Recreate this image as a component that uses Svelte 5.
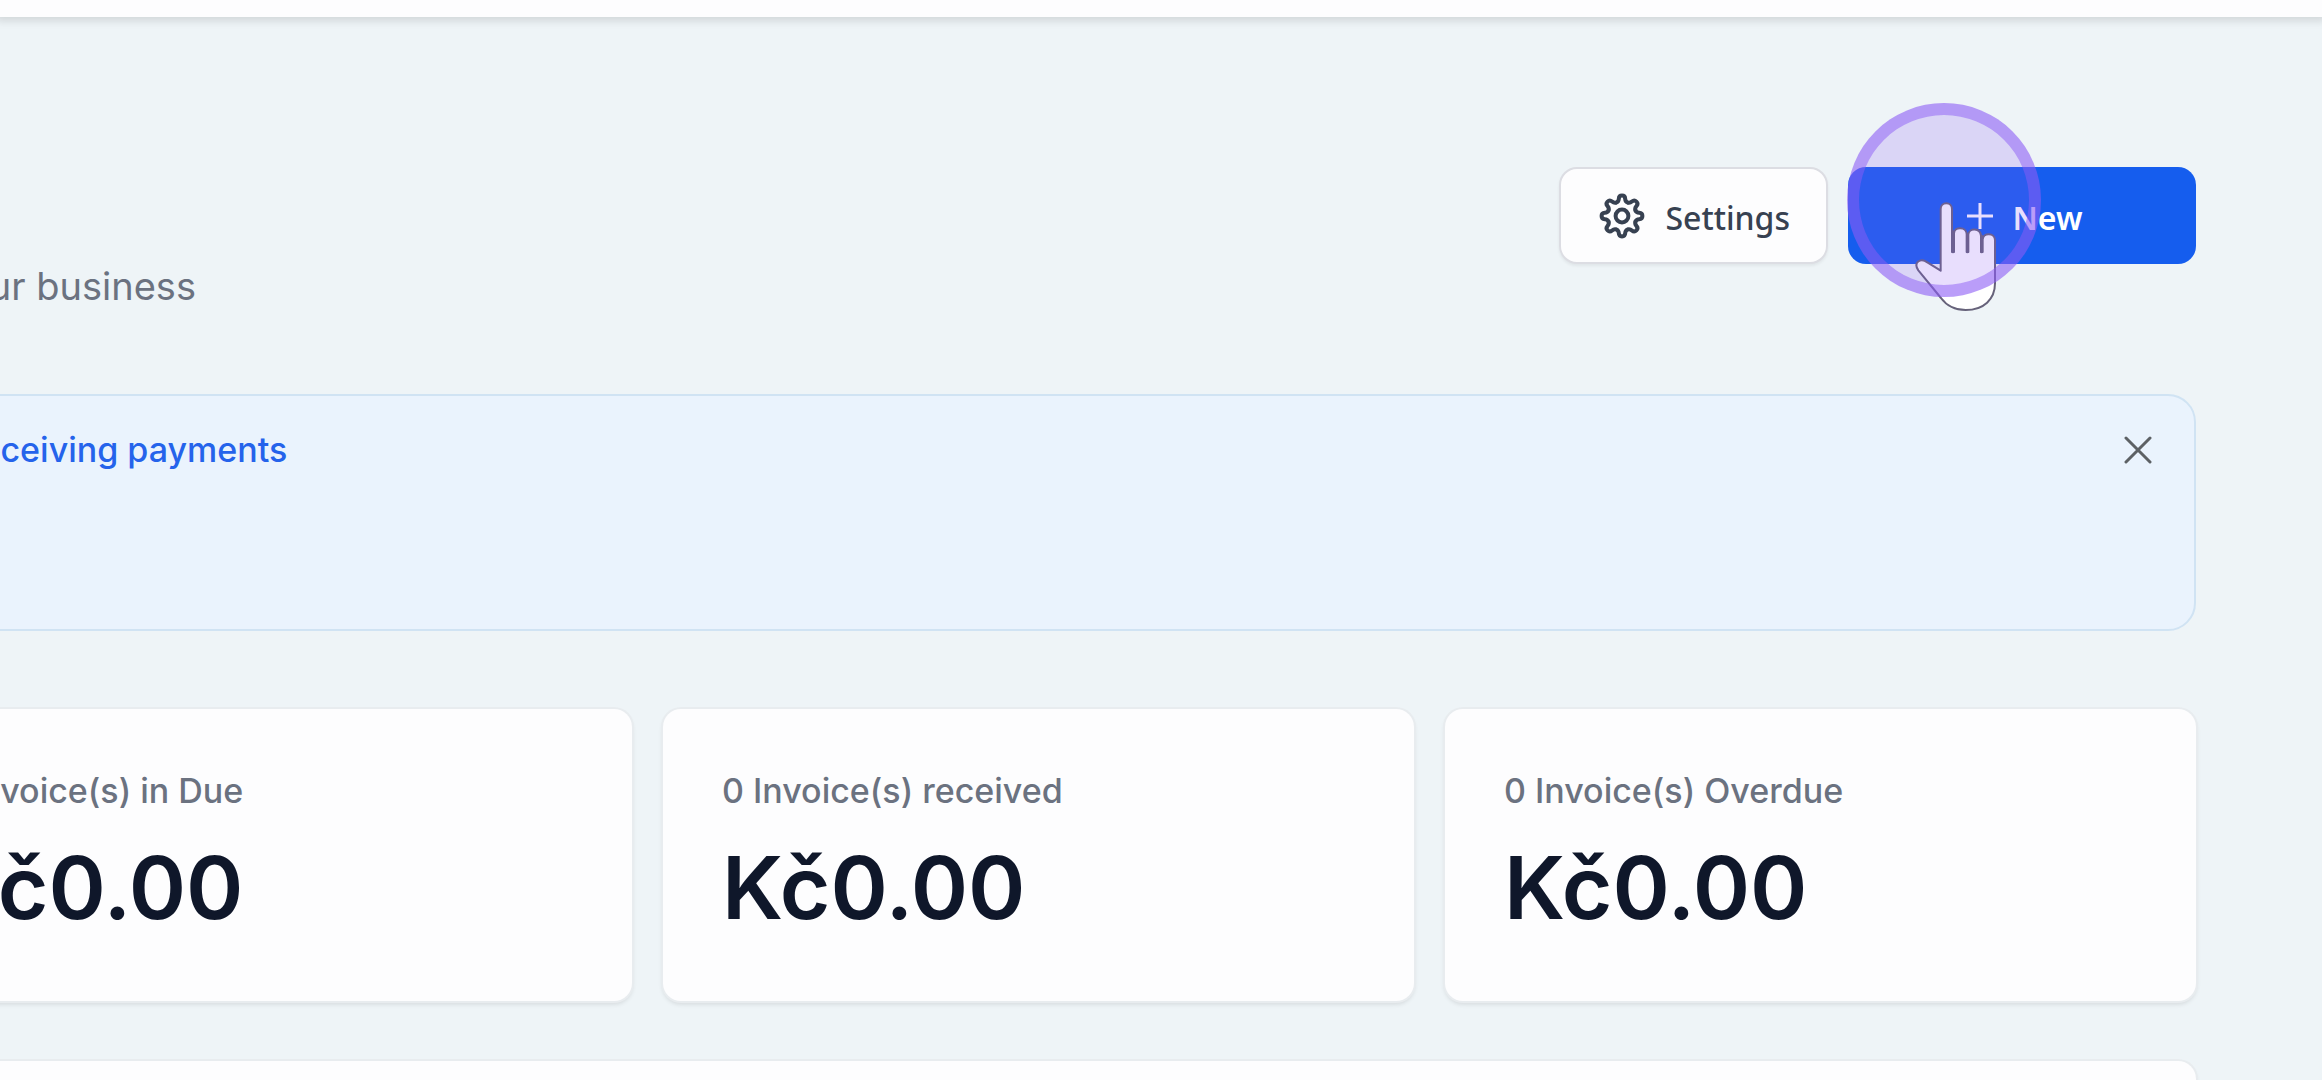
<script lang="ts">
  type Stat = { label: string; amount: string };

  const stats: Stat[] = [
    { label: "0 Invoice(s) in Due", amount: "Kč0.00" },
    { label: "0 Invoice(s) received", amount: "Kč0.00" },
    { label: "0 Invoice(s) Overdue", amount: "Kč0.00" },
  ];

  // one angle per tooth of the cog
  const teeth = [0, 45, 90, 135, 180, 225, 270, 315];

  let showBanner = $state(true);
</script>

<div class="page">
  <header class="topbar"></header>

  <main class="content">
    <div class="heading">
      <p class="subtitle"><span>your business</span></p>

      <div class="actions">
        <button class="btn settings">
          <svg class="cog" viewBox="-23 -23 46 46" aria-hidden="true">
            {#each teeth as angle}
              <path
                transform="rotate({angle})"
                d="M-5.6 -13.5C-3.6 -14.3 -3.3 -15.6 -3.2 -17.2C-3.1 -19.2 -2 -20.4 0 -20.4C2 -20.4 3.1 -19.2 3.2 -17.2C3.3 -15.6 3.6 -14.3 5.6 -13.5"
              />
            {/each}
            <circle r="6.4" />
          </svg>
          <span class="btn-label">Settings</span>
        </button>

        <div class="new-wrap">
          <button class="btn new">
            <svg class="plus" viewBox="0 0 26 26" aria-hidden="true">
              <path d="M13 0V26M0 13H26" />
            </svg>
            <span class="btn-label">New</span>
          </button>
          <svg class="pointer" viewBox="250 330 255 339" aria-hidden="true">
            <path
              d="M333 542V357C333 334 367 334 367 357V486H373V430C374 409 410 409 411 432V486H416V434C418 413 452 413 454 438V486H459V448C461 427 495 427 496 450V580C496 628 462 660 408 660C372 660 350 646 334 624L266 541C250 518 272 502 293 517Z"
            />
            <path class="crease" d="M370 425V486M413 432V486M456 438V486" />
          </svg>
          <span class="click-ring"></span>
        </div>
      </div>
    </div>

    {#if showBanner}
      <section class="banner">
        <a class="banner-link" href="#payments">receiving payments</a>
        <button class="close" aria-label="Close" onclick={() => (showBanner = false)}>
          <svg viewBox="0 0 28 28" aria-hidden="true">
            <path d="M2 2L26 26M26 2L2 26" />
          </svg>
        </button>
      </section>
    {/if}

    <section class="stats">
      {#each stats as stat}
        <article class="card">
          <h2>{stat.label}</h2>
          <p class="amount">{stat.amount}</p>
        </article>
      {/each}
    </section>

    <section class="card panel"></section>
  </main>
</div>

<style>
  :global(body) {
    margin: 0;
  }

  .page {
    display: flex;
    flex-direction: column;
    min-height: 100vh;
    overflow: hidden;
    background: #eef4f7;
    font-family: Inter, "Liberation Sans", sans-serif;
  }

  .topbar {
    height: 17px;
    background: #fdfdfe;
    box-shadow: 0 0 8px 4px rgba(0, 0, 0, 0.12);
  }

  /* the left part of the dashboard runs past the window edge */
  .content {
    flex: 1;
    display: flex;
    flex-direction: column;
    margin-left: -119px;
    padding: 150px 126px 0 0;
  }

  .heading {
    display: flex;
    justify-content: space-between;
    align-items: flex-start;
    margin-bottom: 84px;
  }

  .subtitle {
    display: flex;
    justify-content: flex-end;
    width: 315px;
    margin: 95px 0 0;
    color: #6b7280;
    font-size: 38px;
    line-height: 48px;
    white-space: nowrap;
  }

  .actions {
    display: flex;
    gap: 20px;
  }

  .btn {
    display: flex;
    align-items: center;
    justify-content: center;
    box-sizing: border-box;
    height: 97px;
    border-radius: 18px;
    font-family: "Noto Sans", "Open Sans", sans-serif;
    font-size: 32px;
    line-height: 44px;
    cursor: pointer;
  }

  .btn-label {
    padding-top: 4px;
  }

  .settings {
    gap: 20px;
    padding: 0 36px 0 38px;
    border: 2px solid #dcdde3;
    background: #fdfdfe;
    box-shadow: 0 2px 3px rgba(0, 0, 0, 0.06);
    color: #374151;
    font-weight: 500;
  }

  .cog {
    width: 46px;
    height: 46px;
    fill: none;
    stroke: #374151;
    stroke-width: 4;
    stroke-linecap: round;
    stroke-linejoin: round;
  }

  .new-wrap {
    position: relative;
  }

  .new {
    gap: 19px;
    width: 348px;
    padding: 0 0 0 6px;
    border: none;
    background: #155dee;
    color: #fff;
    font-weight: 600;
  }

  .plus {
    width: 26px;
    height: 26px;
    stroke: #fff;
    stroke-width: 3;
  }

  .pointer {
    position: absolute;
    top: 33px;
    left: 65px;
    width: 85px;
    height: 113px;
    fill: #fff;
    stroke: #66627a;
    stroke-width: 6;
    stroke-linejoin: round;
    pointer-events: none;
  }

  .crease {
    stroke-width: 8;
    stroke-linecap: round;
  }

  .click-ring {
    position: absolute;
    top: -64px;
    left: -1px;
    box-sizing: border-box;
    width: 194px;
    height: 194px;
    border: 12px solid rgba(139, 92, 246, 0.5);
    border-radius: 50%;
    background: rgba(139, 92, 246, 0.2);
    pointer-events: none;
  }

  .banner {
    display: flex;
    justify-content: space-between;
    align-items: flex-start;
    box-sizing: border-box;
    min-height: 237px;
    margin-bottom: 78px;
    padding: 34px 40px 34px 85px;
    border: 2px solid #d0e3f3;
    border-radius: 28px;
    background: #eaf3fd;
  }

  .banner-link {
    color: #2563eb;
    font-size: 34px;
    font-weight: 500;
    line-height: 40px;
    text-decoration: none;
    white-space: nowrap;
  }

  .close {
    display: flex;
    padding: 6px 2px;
    border: none;
    background: none;
    cursor: pointer;
  }

  .close svg {
    width: 28px;
    height: 28px;
    stroke: #5d6165;
    stroke-width: 3;
    stroke-linecap: round;
  }

  .stats {
    display: grid;
    grid-template-columns: repeat(3, 1fr);
    gap: 31px;
    margin-bottom: 60px;
  }

  .card {
    padding: 62px 59px 57px;
    border-radius: 18px;
    background: #fdfdfe;
    box-shadow: 0 0 0 2px #e8ecef, 0 3px 5px rgba(0, 0, 0, 0.12);
  }

  .card h2 {
    margin: 0 0 21px;
    color: #6b7280;
    font-size: 34px;
    font-weight: 500;
    line-height: 40px;
    white-space: nowrap;
  }

  .amount {
    margin: 0;
    color: #0f172a;
    font-size: 87px;
    font-weight: 600;
    line-height: 112px;
  }

  .panel {
    flex: 1;
    padding: 0;
    border-radius: 18px 18px 0 0;
  }
</style>
